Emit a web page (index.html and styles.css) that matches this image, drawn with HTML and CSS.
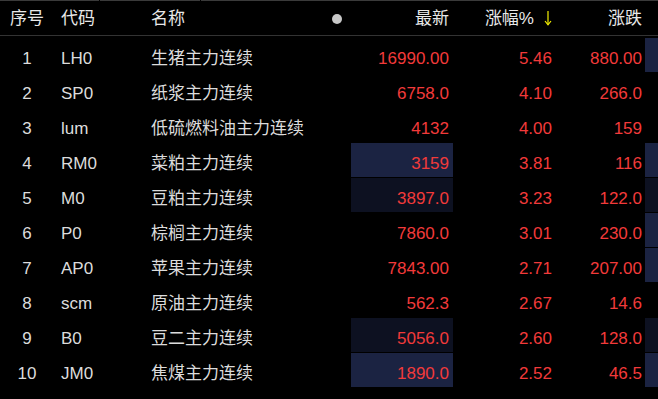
FILE: index.html
```html
<!DOCTYPE html>
<html lang="zh">
<head>
<meta charset="utf-8">
<link rel="stylesheet" href="styles.css">
</head>
<body>
<div class="topline"><span class="seg s1"></span><span class="seg s2"></span><span class="seg s3"></span></div>
<div class="head">
  <div class="c-no">序号</div>
  <div class="c-code">代码</div>
  <div class="c-name name-head"><span>名称</span><span class="dot"></span></div>
  <div class="c-num">最新</div>
  <div class="c-pct">涨幅%<svg class="arrow" width="8" height="16" viewBox="0 0 8 16"><path d="M4 1 V14.5" stroke="#f5f000" stroke-width="1.2" fill="none"/><path d="M1 11 L4 14.8 L7 11" stroke="#f5f000" stroke-width="1.2" fill="none"/></svg></div>
  <div class="c-chg">涨跌</div>
  <div class="c-edge"></div>
</div>
<div class="rows">
  <div class="row"><div class="c-no">1</div><div class="c-code">LH0</div><div class="c-name">生猪主力连续</div><div class="c-num up">16990.00</div><div class="c-pct up">5.46</div><div class="c-chg up">880.00</div><div class="c-edge hl"></div></div>
  <div class="row"><div class="c-no">2</div><div class="c-code">SP0</div><div class="c-name">纸浆主力连续</div><div class="c-num up">6758.0</div><div class="c-pct up">4.10</div><div class="c-chg up">266.0</div><div class="c-edge"></div></div>
  <div class="row"><div class="c-no">3</div><div class="c-code">lum</div><div class="c-name">低硫燃料油主力连续</div><div class="c-num up">4132</div><div class="c-pct up">4.00</div><div class="c-chg up">159</div><div class="c-edge"></div></div>
  <div class="row"><div class="c-no">4</div><div class="c-code">RM0</div><div class="c-name">菜粕主力连续</div><div class="c-num up hl">3159</div><div class="c-pct up">3.81</div><div class="c-chg up">116</div><div class="c-edge hl"></div></div>
  <div class="row"><div class="c-no">5</div><div class="c-code">M0</div><div class="c-name">豆粕主力连续</div><div class="c-num up dim">3897.0</div><div class="c-pct up">3.23</div><div class="c-chg up">122.0</div><div class="c-edge dim"></div></div>
  <div class="row"><div class="c-no">6</div><div class="c-code">P0</div><div class="c-name">棕榈主力连续</div><div class="c-num up">7860.0</div><div class="c-pct up">3.01</div><div class="c-chg up">230.0</div><div class="c-edge hl"></div></div>
  <div class="row"><div class="c-no">7</div><div class="c-code">AP0</div><div class="c-name">苹果主力连续</div><div class="c-num up">7843.00</div><div class="c-pct up">2.71</div><div class="c-chg up">207.00</div><div class="c-edge hl"></div></div>
  <div class="row"><div class="c-no">8</div><div class="c-code">scm</div><div class="c-name">原油主力连续</div><div class="c-num up">562.3</div><div class="c-pct up">2.67</div><div class="c-chg up">14.6</div><div class="c-edge"></div></div>
  <div class="row"><div class="c-no">9</div><div class="c-code">B0</div><div class="c-name">豆二主力连续</div><div class="c-num up dim">5056.0</div><div class="c-pct up">2.60</div><div class="c-chg up">128.0</div><div class="c-edge dim"></div></div>
  <div class="row"><div class="c-no">10</div><div class="c-code">JM0</div><div class="c-name">焦煤主力连续</div><div class="c-num up hl">1890.0</div><div class="c-pct up">2.52</div><div class="c-chg up">46.5</div><div class="c-edge hl"></div></div>
</div>
</body>
</html>
```

FILE: styles.css
```css
html, body {
  margin: 0;
  padding: 0;
  background: #000;
  width: 658px;
  height: 399px;
  overflow: hidden;
}
body {
  font-family: "Liberation Sans", "Noto Sans CJK SC", sans-serif;
  font-size: 17px;
  color: #dcdcdc;
}
.topline {
  display: flex;
  gap: 1px;
  height: 1px;
}
.seg { background: #3a3a3a; height: 1px; }
.s1 { width: 99px; }
.s2 { width: 100px; }
.s3 { flex: 1; }

.head, .row {
  display: grid;
  grid-template-columns: 54px 97px 200px 102px 103px 89px 13px;
}
.head {
  height: 34px;
  border-bottom: 1px solid #333;
  color: #e8e8e8;
}
.head > div {
  padding-top: 8px;
  line-height: 20px;
}
.rows {
  padding-top: 2px;
  display: flex;
  flex-direction: column;
  gap: 1px;
}
.row { height: 34px; }
.row > div {
  padding-top: 11px;
  line-height: 20px;
  box-sizing: border-box;
  height: 34px;
}
.c-no { text-align: center; }
.c-code { padding-left: 7px; }
.c-name { white-space: nowrap; }
.name-head {
  display: flex;
  justify-content: space-between;
  align-items: flex-start;
}
.dot {
  width: 10px;
  height: 10px;
  border-radius: 50%;
  background: #c8c8c8;
  margin-top: 5px;
  margin-right: 9px;
}
.c-num { text-align: right; padding-right: 4px; }
.c-pct { text-align: right; padding-right: 4px; }
.c-chg { text-align: right; padding-right: 3px; }
.arrow { margin-left: 10px; vertical-align: -2px; }
.up { color: #f23a3a; }
.hl { background: #1b2342; }
.dim { background: #0d1121; }
```
